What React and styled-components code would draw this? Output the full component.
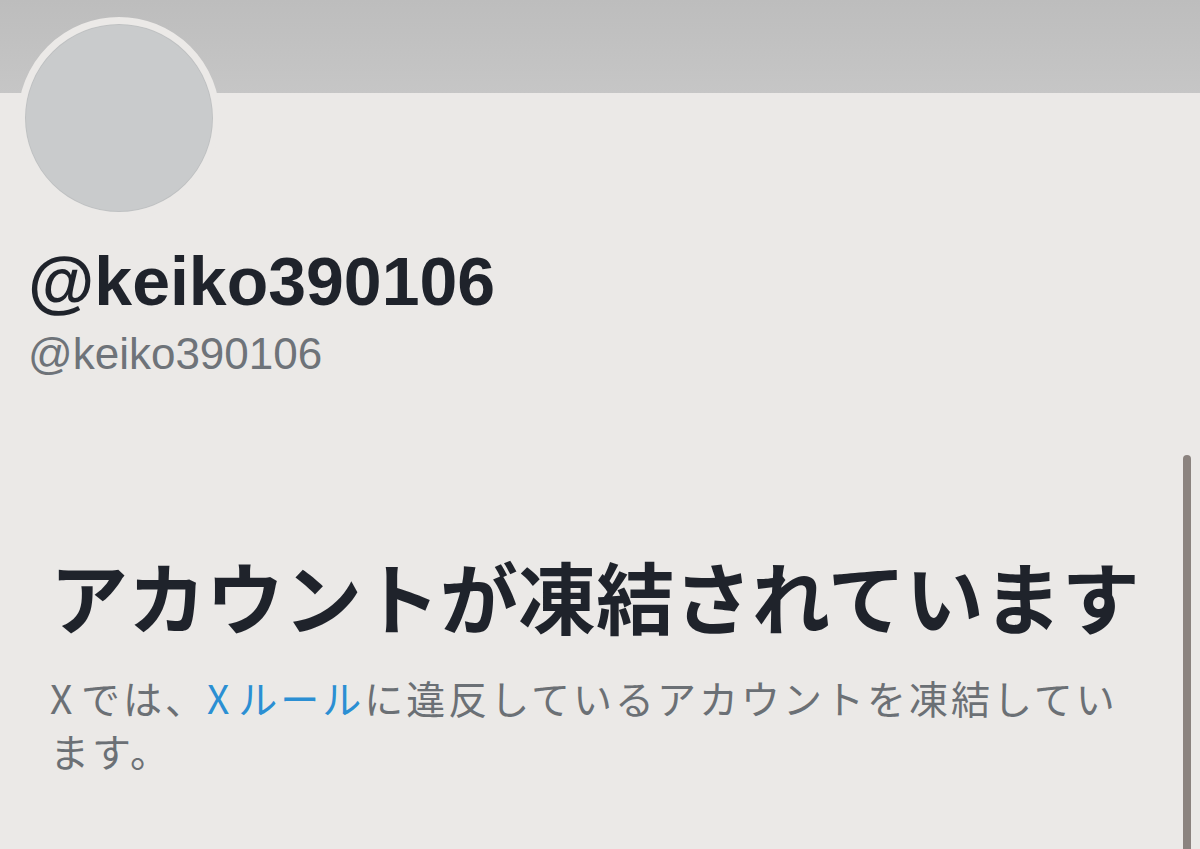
import styled, { createGlobalStyle } from 'styled-components';

const GlobalStyle = createGlobalStyle`
  html, body {
    margin: 0;
    padding: 0;
    background: #ebe9e7;
  }
  body {
    font-family: "Liberation Sans", "Noto Sans CJK JP", sans-serif;
    overflow: hidden;
  }
`;

export default function App() {
  return (
    <Page>
      <GlobalStyle />
      <Banner />
      <Profile>
        <Avatar />
        <DisplayName>@keiko390106</DisplayName>
        <Handle>@keiko390106</Handle>
      </Profile>
      <Notice>
        <Title>アカウントが凍結されています</Title>
        <Body>
          X では、<RuleLink href="#">X ルール</RuleLink>に違反しているアカウントを凍結しています。
        </Body>
      </Notice>
      <Scrollbar />
    </Page>
  );
}

const Page = styled.div`
  position: relative;
  width: 1200px;
  height: 849px;
  overflow: hidden;
  background: #ebe9e7;
`;

const Banner = styled.div`
  height: 93px;
  background: linear-gradient(#bdbdbd, #c6c6c6);
`;

const Profile = styled.div`
  display: flex;
  flex-direction: column;
  align-items: flex-start;
  padding-left: 18px;
`;

const Avatar = styled.div`
  width: 188px;
  height: 188px;
  margin-top: -76px;
  border-radius: 50%;
  border: 7px solid #ebe9e7;
  background: #c9cbcc;
  box-shadow: inset 0 0 0 1px #bfc1c2;
`;

const DisplayName = styled.div`
  margin: 22px 0 0 10px;
  font-family: "Liberation Sans", "Inter", sans-serif;
  font-weight: 700;
  font-size: 68px;
  line-height: 80px;
  color: #1f232b;
`;

const Handle = styled.div`
  margin: 7px 0 0 10px;
  font-family: "Liberation Sans", sans-serif;
  font-size: 44px;
  line-height: 52px;
  color: #6e7379;
`;

const Notice = styled.div`
  width: 1100px;
  padding: 0 0 0 50px;
  margin-top: 165px;
`;

const Title = styled.h1`
  margin: 0;
  font-family: "Noto Sans CJK JP", sans-serif;
  font-weight: 700;
  font-size: 78px;
  line-height: 100px;
  color: #1f232b;
  white-space: nowrap;
`;

const Body = styled.p`
  width: 1085px;
  margin: 26px 0 0 0;
  font-family: "Noto Sans CJK JP", sans-serif;
  font-weight: 400;
  font-size: 39px;
  line-height: 53px;
  letter-spacing: 3px;
  color: #6b7075;
  word-spacing: -6px;
`;

const RuleLink = styled.a`
  color: #2b8fd3;
  text-decoration: none;
`;

const Scrollbar = styled.div`
  position: absolute;
  right: 9px;
  top: 455px;
  bottom: 0;
  width: 8px;
  border-radius: 4px 4px 0 0;
  background: #8b837f;
`;
